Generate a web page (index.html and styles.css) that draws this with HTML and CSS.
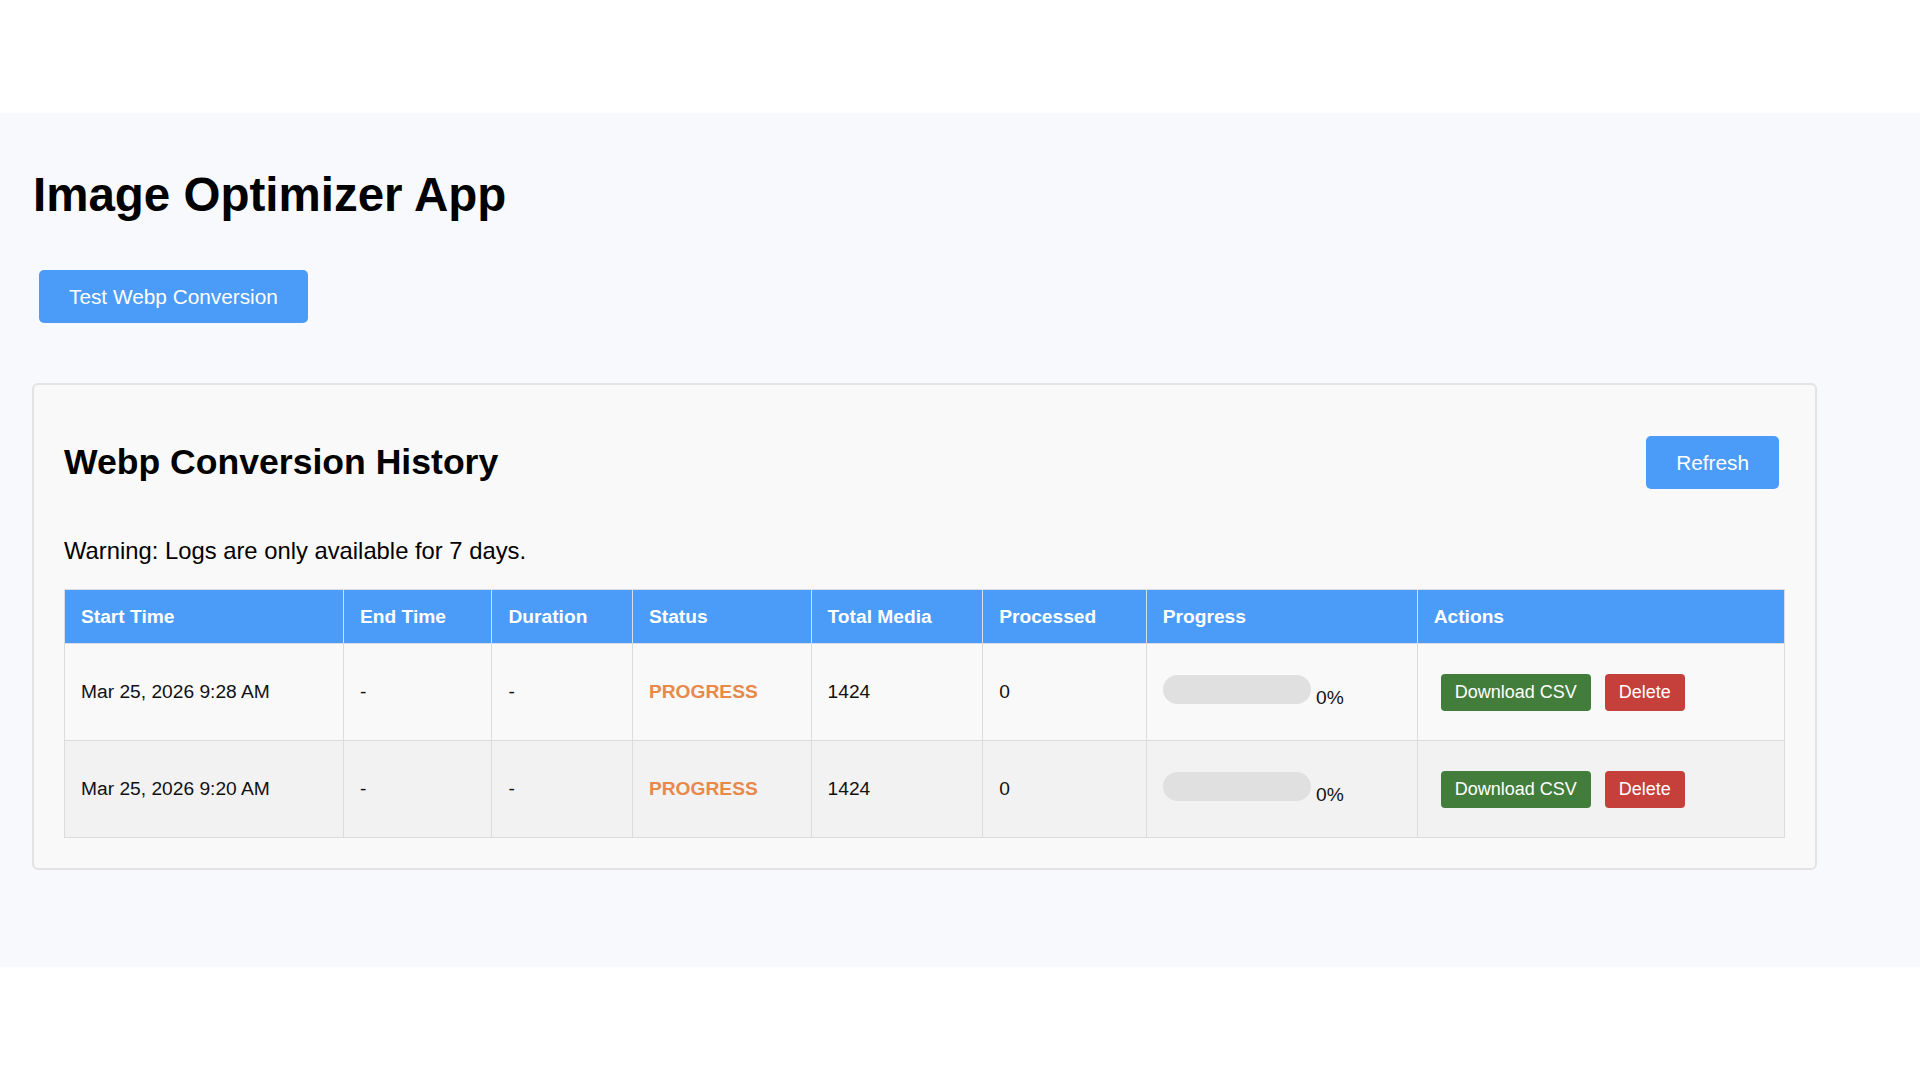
FILE: index.html
```html
<!DOCTYPE html>
<html lang="en">
<head>
  <meta charset="UTF-8">
  <title>Image Optimizer App</title>
  <meta name="viewport" content="width=device-width, initial-scale=1">
  <link rel="stylesheet" href="styles.css">
</head>
<body>
  <div class="wrap">
    <h1>Image Optimizer App</h1>

    <div class="top-actions">
      <button class="btn btn-blue">Test Webp Conversion</button>
    </div>

    <div class="card">
      <div class="card-head">
        <h2>Webp Conversion History</h2>
        <button class="btn btn-blue refresh">Refresh</button>
      </div>

      <p class="warning">Warning: Logs are only available for 7 days.</p>

      <table class="history">
        <thead>
          <tr>
            <th class="c-start">Start Time</th>
            <th class="c-end">End Time</th>
            <th class="c-dur">Duration</th>
            <th class="c-status">Status</th>
            <th class="c-total">Total Media</th>
            <th class="c-proc">Processed</th>
            <th class="c-prog">Progress</th>
            <th class="c-act">Actions</th>
          </tr>
        </thead>
        <tbody>
          <tr>
            <td>Mar 25, 2026 9:28 AM</td>
            <td>-</td>
            <td>-</td>
            <td class="status">PROGRESS</td>
            <td>1424</td>
            <td>0</td>
            <td><div class="bar"><div class="fill" style="width: 0%"></div></div> 0%</td>
            <td><button class="small green">Download CSV</button><button class="small red">Delete</button></td>
          </tr>
          <tr>
            <td>Mar 25, 2026 9:20 AM</td>
            <td>-</td>
            <td>-</td>
            <td class="status">PROGRESS</td>
            <td>1424</td>
            <td>0</td>
            <td><div class="bar"><div class="fill" style="width: 0%"></div></div> 0%</td>
            <td><button class="small green">Download CSV</button><button class="small red">Delete</button></td>
          </tr>
        </tbody>
      </table>
    </div>
  </div>
</body>
</html>
```

FILE: styles.css
```css
body {
  margin: 0;
  background: #fff;
  font-family: "Liberation Sans", Arial, sans-serif;
  color: #000;
}
.wrap {
  margin-top: 113px;
  background: #f8f9fd;
  min-height: 854px;
  box-sizing: border-box;
  padding: 1px 32px;
}
h1 {
  font-size: 47.5px;
  margin: 53px 0 48px 1px;
}
.top-actions {
  margin-left: 7px;
}
.btn {
  font-family: inherit;
  font-size: 20.8px;
  line-height: 23px;
  padding: 15px 30px;
  border: none;
  border-radius: 5px;
  cursor: pointer;
}
.btn-blue {
  background: #4b9cf8;
  color: #fff;
}
.card {
  margin-top: 60px;
  margin-right: 71px;
  background: #f9f9f9;
  border: 2px solid #e3e3e3;
  border-radius: 6px;
  padding: 27px 30px 30px;
}
.card-head {
  display: flex;
  justify-content: space-between;
  align-items: center;
}
.card-head h2 {
  font-size: 35.6px;
  margin: 30px 0;
}
.refresh {
  margin-right: 6px;
}
.warning {
  font-size: 23.8px;
  margin: 24px 0;
}
.history {
  width: 100%;
  border-collapse: collapse;
  table-layout: fixed;
  font-size: 19.2px;
}
.history th {
  background: #4b9cf8;
  color: #fff;
  text-align: left;
  font-weight: bold;
  padding: 16px;
  border: 1px solid #d9dde3;
  line-height: 21px;
}
.history td {
  padding: 29.5px 16px;
  border: 1px solid #dcdcdc;
  vertical-align: middle;
  color: #111;
}
.history tbody tr:nth-child(1) td { background: #f9f9f9; }
.history tbody tr:nth-child(2) td { background: #f2f2f2; }
.c-start { width: 245px; }
.c-end { width: 115px; }
.c-dur { width: 107px; }
.c-status { width: 145px; }
.c-total { width: 138px; }
.c-proc { width: 130px; }
.c-prog { width: 237px; }
.c-act { width: 333px; }
.history td.status {
  color: #e8894a;
  font-weight: bold;
}
.bar {
  display: inline-block;
  width: 148px;
  height: 29px;
  background: #e0e0e0;
  border-radius: 15px;
  overflow: hidden;
}
.bar .fill {
  height: 100%;
  background: #4b9cf8;
}
.small {
  font-family: inherit;
  font-size: 18px;
  line-height: 21px;
  padding: 8px 14px;
  margin: 0 7px;
  border: none;
  border-radius: 4px;
  color: #fff;
  cursor: pointer;
  vertical-align: middle;
}
.green { background: #437d3b; }
.red { background: #c5403a; }
```
